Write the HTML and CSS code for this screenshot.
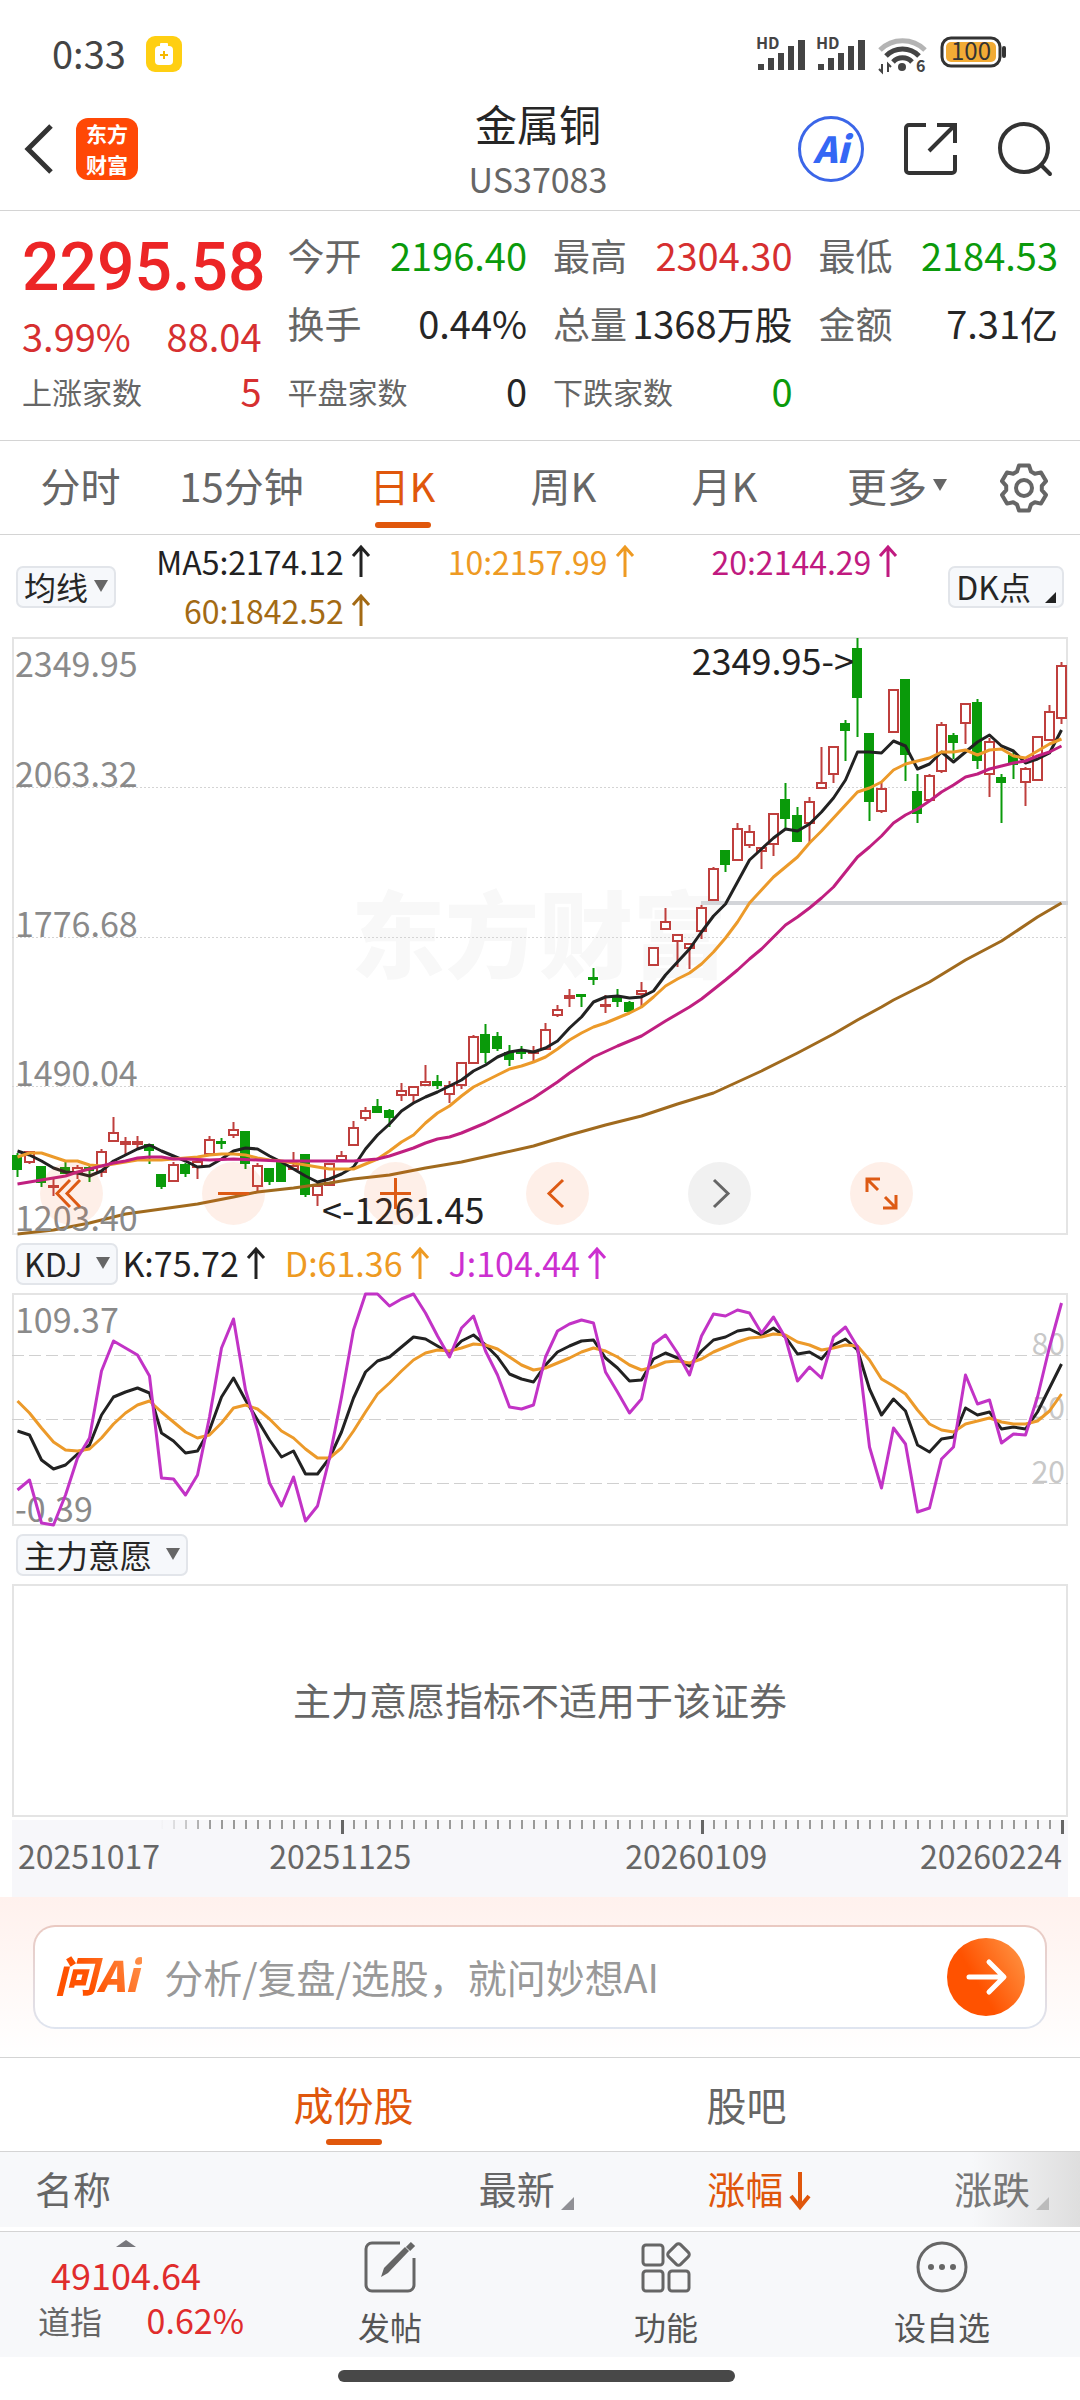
FILE: index.html
```html
<!DOCTYPE html>
<html lang="zh-CN">
<head>
<meta charset="utf-8">
<meta name="viewport" content="width=device-width, initial-scale=1">
<title>金属铜 US37083</title>
<link rel="stylesheet" href="styles.css">
</head>
<body>
<div class="status">
  <div class="status-left">
    <span class="clock">0:33</span>
    <svg class="saver" width="36" height="36" viewBox="0 0 36 36" aria-hidden="true">
      <rect width="36" height="36" rx="9" fill="#ffcf12"/>
      <rect x="14" y="7" width="8" height="4" rx="1" fill="#fff"/>
      <rect x="9" y="10" width="18" height="19" rx="4" fill="#fff"/>
      <path d="M18 15v8M14 19h8" stroke="#f5b800" stroke-width="2"/>
    </svg>
  </div>
  <svg class="status-icons" width="254" height="36" viewBox="0 0 254 36" aria-hidden="true">
    <g fill="#444">
      <text class="hd" x="0" y="13">HD</text>
      <text class="hd" x="60" y="13">HD</text>
      <path d="M2 28h6v6H2zM12 22h6v12h-6zM22 17h6v17h-6zM32 10h6v24h-6zM42 4h7v30h-7z"/>
      <path d="M62 28h6v6h-6zM72 22h6v12h-6zM82 17h6v17h-6zM92 10h6v24h-6zM102 4h7v30h-7z"/>
    </g>
    <g fill="none" stroke-width="5">
      <path d="M124 14a32 32 0 0 1 45 0" stroke="#b4b4b4"/>
      <path d="M130 20a23 23 0 0 1 33 0M137 26a13 13 0 0 1 19 0" stroke="#444"/>
    </g>
    <circle cx="146" cy="31" r="4" fill="#444"/>
    <path d="M126 28v8l-3-3M132 36v-8l3 3" fill="none" stroke="#444" stroke-width="2"/>
    <text class="wifi-gen" x="160" y="36">6</text>
    <rect x="186" y="2" width="58" height="28" rx="9" fill="none" stroke="#333" stroke-width="3"/>
    <rect x="190" y="6" width="50" height="20" rx="5" fill="#f2ab35"/>
    <path d="M248 12v8" stroke="#333" stroke-width="4" stroke-linecap="round"/>
    <text class="battery" x="215" y="24">100</text>
  </svg>
</div>

<header class="header">
  <div class="header-side">
    <button class="icon-btn" aria-label="返回">
      <svg width="30" height="52" viewBox="0 0 30 52"><path d="M27 3L4 26l23 23" fill="none" stroke="#333" stroke-width="5"/></svg>
    </button>
    <div class="brand"><span>东方</span><span>财富</span></div>
  </div>
  <div class="title">
    <h1>金属铜</h1>
    <p>US37083</p>
  </div>
  <div class="header-side header-tools">
    <button class="icon-btn ai-btn" aria-label="AI">Ai</button>
    <button class="icon-btn" aria-label="分享">
      <svg width="54" height="54" viewBox="0 0 54 54"><path d="M22 3H5a3 3 0 0 0-3 3v42a3 3 0 0 0 3 3h43a3 3 0 0 0 3-3V33M33 3h18v18M50 4L25 29" fill="none" stroke="#333" stroke-width="4"/></svg>
    </button>
    <button class="icon-btn" aria-label="搜索">
      <svg width="54" height="54" viewBox="0 0 54 54"><circle cx="26" cy="26" r="24" fill="none" stroke="#333" stroke-width="4"/><path d="M43 43l9 9" stroke="#333" stroke-width="4" stroke-linecap="round"/></svg>
    </button>
  </div>
</header>

<section class="quote">
  <div class="price-block">
    <strong>2295.58</strong>
    <div class="cell up"><span>3.99%</span><span>88.04</span></div>
  </div>
  <div class="cell"><span class="label">今开</span><span class="down">2196.40</span></div>
  <div class="cell"><span class="label">最高</span><span class="up">2304.30</span></div>
  <div class="cell"><span class="label">最低</span><span class="down">2184.53</span></div>
  <div class="cell"><span class="label">换手</span><span>0.44%</span></div>
  <div class="cell"><span class="label">总量</span><span>1368万股</span></div>
  <div class="cell"><span class="label">金额</span><span>7.31亿</span></div>
  <div class="cell"><span class="label small">上涨家数</span><span class="up">5</span></div>
  <div class="cell"><span class="label small">平盘家数</span><span>0</span></div>
  <div class="cell"><span class="label small">下跌家数</span><span class="down">0</span></div>
</section>

<nav class="periods">
  <button class="tab">分时</button>
  <button class="tab">15分钟</button>
  <button class="tab active">日K</button>
  <button class="tab">周K</button>
  <button class="tab">月K</button>
  <button class="tab">更多<i class="caret"></i></button>
  <button class="tab settings" aria-label="设置">
    <svg width="50" height="50" viewBox="-25 -25 50 50" fill="none" stroke="#666" stroke-width="4" stroke-linejoin="round">
      <path d="M-5-22.5L5-22.5 7-16.5 10.8-14.3 17-15.6 22-6.9 17.8-2.2 17.8 2.2 22 6.9 17 15.6 10.8 14.3 7 16.5 5 22.5-5 22.5-7 16.5-10.8 14.3-17 15.6-22 6.9-17.8 2.2-17.8-2.2-22-6.9-17-15.6-10.8-14.3-7-16.5z"/>
      <circle r="8"/>
    </svg>
  </button>
</nav>

<section class="ma-bar">
  <button class="chip">均线<i class="caret"></i></button>
  <div class="ma-list">
    <span class="c-black">MA5:2174.12<svg class="arrow" viewBox="0 0 18 32"><path d="M9 32V2M1 11l8-9 8 9"/></svg></span>
    <span class="c-orange">10:2157.99<svg class="arrow" viewBox="0 0 18 32"><path d="M9 32V2M1 11l8-9 8 9"/></svg></span>
    <span class="c-magenta">20:2144.29<svg class="arrow" viewBox="0 0 18 32"><path d="M9 32V2M1 11l8-9 8 9"/></svg></span>
    <span class="c-brown">60:1842.52<svg class="arrow" viewBox="0 0 18 32"><path d="M9 32V2M1 11l8-9 8 9"/></svg></span>
  </div>
  <button class="chip">DK点<i class="corner"></i></button>
</section>

<section class="frame">
  <svg id="kline" class="plot" viewBox="0 0 1056 598" role="img" aria-label="日K线">
    <text class="watermark" x="339" y="334">东方财富</text>
    <path class="dotted" d="M0 150.5H1056M0 300.5H1056M0 449.5H1056"/>
    <path d="M689 266H1056" stroke="#d3d5d9" stroke-width="4"/>
    <g id="candles"></g>
    <g id="averages"></g>
    <g class="axis-label">
      <text x="3" y="40">2349.95</text>
      <text x="3" y="150">2063.32</text>
      <text x="3" y="300">1776.68</text>
      <text x="3" y="449">1490.04</text>
      <text x="3" y="594">1203.40</text>
    </g>
    <text class="mark" x="842" y="38" text-anchor="end">2349.95-&gt;</text>
    <text class="mark" x="310" y="587">&lt;-1261.45</text>
  </svg>
  <div class="controls">
    <button class="round" aria-label="最早"><svg viewBox="0 0 63 63"><path d="M30 18L17 31.500l13 13.500M40 18L27 31.500l13 13.500"/></svg></button>
    <button class="round" aria-label="缩小"><svg viewBox="0 0 63 63"><path d="M16 31.500h31"/></svg></button>
    <button class="round" aria-label="放大"><svg viewBox="0 0 63 63"><path d="M16 31.500h31M31.500 16v31"/></svg></button>
    <button class="round" aria-label="前移"><svg viewBox="0 0 63 63"><path d="M37 18L23 31.500l14 13.500"/></svg></button>
    <button class="round muted" aria-label="后移"><svg viewBox="0 0 63 63"><path d="M26 18l14 13.500L26 45"/></svg></button>
    <button class="round" aria-label="全屏"><svg viewBox="0 0 63 63"><path d="M17 30V17h13M17 17l11 11M46 33v13H33M46 46L35 35"/></svg></button>
  </div>
</section>

<section class="kdj-bar">
  <button class="chip">KDJ<i class="caret wide"></i></button>
  <span class="c-black">K:75.72<svg class="arrow" viewBox="0 0 18 32"><path d="M9 32V2M1 11l8-9 8 9"/></svg></span>
  <span class="c-orange">D:61.36<svg class="arrow" viewBox="0 0 18 32"><path d="M9 32V2M1 11l8-9 8 9"/></svg></span>
  <span class="c-purple">J:104.44<svg class="arrow" viewBox="0 0 18 32"><path d="M9 32V2M1 11l8-9 8 9"/></svg></span>
</section>

<section class="frame">
  <svg class="plot" viewBox="0 0 1056 233" role="img" aria-label="KDJ">
    <path class="dashed" d="M0 62.500H1056M0 126.500H1056M0 190.500H1056"/>
    <g class="level">
      <text x="1053" y="62">80</text>
      <text x="1053" y="126">50</text>
      <text x="1053" y="190">20</text>
    </g>
    <g class="axis-label">
      <text x="3" y="40">109.37</text>
      <text x="3" y="229">-0.39</text>
    </g>
    <g id="kdj"></g>
  </svg>
</section>

<section class="will-bar"><button class="chip">主力意愿<i class="caret wide"></i></button></section>
<section class="frame empty">主力意愿指标不适用于该证券</section>

<section class="dates">
  <svg class="plot" viewBox="0 0 1056 16" aria-hidden="true">
    <defs><linearGradient id="fade" gradientUnits="userSpaceOnUse" x1="148" x2="200" y1="0" y2="0"><stop stop-color="#999" stop-opacity="0"/><stop offset="1" stop-color="#999"/></linearGradient></defs>
    <g id="ticks"></g>
  </svg>
  <div class="date-row"><span>20251017</span><span>20251125</span><span>20260109</span><span>20260224</span></div>
</section>

<section class="ask">
  <form class="ask-box">
    <label class="ask-logo" for="ask">问Ai</label>
    <input id="ask" type="text" placeholder="分析/复盘/选股，就问妙想AI">
    <button class="send" type="button" aria-label="发送"><svg viewBox="0 0 78 78"><path d="M22 39h34M42 24l15 15-15 15" fill="none" stroke="#fff" stroke-width="5" stroke-linecap="round" stroke-linejoin="round"/></svg></button>
  </form>
</section>

<nav class="sections">
  <button class="tab active">成份股</button>
  <button class="tab">股吧</button>
</nav>

<table class="members">
  <thead>
    <tr>
      <th>名称</th>
      <th>最新<i class="sort"></i></th>
      <th class="sorted">涨幅<svg class="sort-down" viewBox="0 0 22 38"><path d="M11 0v34M2 24l9 11 9-11"/></svg></th>
      <th>涨跌<i class="sort light"></i></th>
    </tr>
  </thead>
</table>

<footer class="dock">
  <button class="index">
    <i class="caret-up"></i>
    <span class="index-value">49104.64</span>
    <span class="index-row"><span class="label">道指</span><span>0.62%</span></span>
  </button>
  <button class="dock-item">
    <svg width="52" height="52" viewBox="0 0 52 52" fill="none" stroke="#666" stroke-width="3"><path d="M36 2H8a6 6 0 0 0-6 6v36a6 6 0 0 0 6 6h36a6 6 0 0 0 6-6V17"/><path d="M17 36l3-9L41 6l4 4-21 22z" fill="#666" stroke="none"/><path d="M44 8l5-5" stroke-width="6"/></svg>
    发帖
  </button>
  <button class="dock-item">
    <svg width="52" height="52" viewBox="0 0 52 52" fill="none" stroke="#666" stroke-width="3"><rect x="3" y="4" width="20" height="20" rx="3"/><rect x="3" y="30" width="20" height="20" rx="3"/><rect x="29" y="30" width="20" height="20" rx="3"/><rect x="30" y="5" width="17" height="17" rx="3" transform="rotate(45 38.500 13.500)"/></svg>
    功能
  </button>
  <button class="dock-item">
    <svg width="52" height="52" viewBox="0 0 52 52"><circle cx="26" cy="26" r="24" fill="none" stroke="#666" stroke-width="3"/><g fill="#666"><circle cx="15" cy="26" r="3"/><circle cx="26" cy="26" r="3"/><circle cx="37" cy="26" r="3"/></g></svg>
    设自选
  </button>
</footer>
<div class="home"><span></span></div>
<script src="chart.js"></script>
</body>
</html>
```

FILE: styles.css
```css
* { box-sizing: border-box; }

body {
  margin: 0;
  background: #fff;
  color: #262626;
  font-family: "Noto Sans CJK SC", "Noto Sans", sans-serif;
  font-size: 38px;
  line-height: 48px;
}

button {
  margin: 0;
  padding: 0;
  border: 0;
  background: none;
  color: inherit;
  font: inherit;
}

svg { display: block; overflow: visible; }
i { flex: none; }

.up { color: #d62f30; }
.down { color: #0b9a0b; }
.c-black { color: #222; }
.c-orange { color: #ee9a22; }
.c-magenta { color: #c01a80; }
.c-brown { color: #a36a14; }
.c-purple { color: #cc2fd0; }

/* status bar */
.status {
  display: flex;
  align-items: center;
  justify-content: space-between;
  height: 96px;
  padding: 12px 70px 0 52px;
}
.status-left { display: flex; align-items: center; gap: 20px; color: #444; }
.clock { padding-bottom: 2px; }
.hd { font-size: 16px; font-weight: 700; }
.wifi-gen { font-size: 16px; font-weight: 700; fill: #444; }
.battery { font-size: 24px; text-anchor: middle; fill: #333; }

/* header */
.header {
  display: grid;
  grid-template-columns: 1fr auto 1fr;
  align-items: center;
  padding: 0 28px 2px 24px;
  border-bottom: 1px solid #d4d4d4;
}
.header-side { display: flex; align-items: center; gap: 22px; padding-bottom: 6px; }
.header-tools { justify-content: flex-end; gap: 40px; }
.brand {
  display: flex;
  flex-direction: column;
  align-items: center;
  width: 62px;
  border-radius: 12px;
  background: #ff4806;
  color: #fff;
  font-size: 21px;
  font-weight: 700;
  line-height: 31px;
}
.title { text-align: center; }
.title h1 { margin: 0; font-size: 42px; font-weight: 400; line-height: 54px; }
.title p { margin: 0; font-size: 34px; line-height: 58px; color: #666; }
.ai-btn {
  width: 66px;
  height: 66px;
  padding-bottom: 4px;
  border: 3px solid #3b66e8;
  border-radius: 50%;
  color: #3467f5;
  font-size: 36px;
  font-style: italic;
  font-weight: 900;
}

/* quote */
.quote {
  display: grid;
  grid-template-columns: repeat(4, minmax(0, 1fr));
  grid-auto-rows: 68px;
  column-gap: 26px;
  padding: 10px 22px 15px;
  border-bottom: 1px solid #d4d4d4;
}
.price-block { grid-row: span 2; padding-top: 3px; }
.price-block strong {
  display: block;
  color: #ec2526;
  font-family: Roboto, "Noto Sans CJK SC", sans-serif;
  font-size: 66px;
  font-weight: 500;
  line-height: 88px;
}
.cell { display: flex; align-items: center; justify-content: space-between; white-space: nowrap; }
.label { color: #666; }
.quote .label { font-size: 37px; }
.quote .label.small { font-size: 30px; }

/* tabs */
.periods, .sections { display: grid; border-bottom: 1px solid #d4d4d4; color: #666; }
.periods { grid-template-columns: repeat(5, 161fr) 184fr 91fr; }
.sections { grid-template-columns: 157fr repeat(2, 393fr) 137fr; }
.sections .tab { padding-bottom: 2px; }
.sections .tab:first-child { grid-column: 2; }
.tab {
  display: flex;
  align-items: center;
  justify-content: center;
  position: relative;
  height: 93px;
  padding-bottom: 5px;
  font-size: 40px;
  white-space: nowrap;
}
.tab.active { color: #e0570c; }
.tab.active::after {
  content: "";
  position: absolute;
  left: calc(50% - 28px);
  bottom: 6px;
  width: 56px;
  height: 6px;
  border-radius: 3px;
  background: #e0570c;
}
.tab.settings { padding: 0 22px 0 0; }

.caret {
  margin-left: 6px;
  border: 7px solid transparent;
  border-top: 12px solid #666;
  border-bottom: 0;
}
.caret.wide { margin-left: 14px; }

/* indicator bars */
.chip {
  display: flex;
  align-items: center;
  height: 42px;
  padding: 0 6px 3px;
  border: 2px solid #e2e5ea;
  border-radius: 7px;
  background: #f6f8fb;
  font-size: 32px;
  line-height: 38px;
  white-space: nowrap;
}
.corner {
  align-self: flex-end;
  margin-left: 14px;
  border-left: 11px solid transparent;
  border-bottom: 11px solid #222;
}
.ma-bar { display: flex; align-items: center; padding: 3px 16px 1px; }
.ma-list {
  display: grid;
  flex: 1;
  grid-template-columns: repeat(3, 264fr) 51fr;
  grid-auto-rows: 49px;
  margin-left: -10px;
  font-size: 32px;
}
.ma-list span { display: flex; align-items: center; justify-content: flex-end; padding-bottom: 4px; }
.ma-list span:nth-child(4) { grid-column: 1; }
.arrow {
  width: 18px;
  height: 32px;
  margin-left: 8px;
  fill: none;
  stroke: currentColor;
  stroke-width: 3;
}
.kdj-bar, .will-bar { display: flex; align-items: center; height: 58px; padding: 0 16px; font-size: 34px; }
.kdj-bar span { display: flex; align-items: center; margin: 0 16px 0 4px; padding-bottom: 2px; }

/* charts */
.frame { position: relative; margin: 0 12px; box-shadow: inset 0 0 0 2px #e4e4e4; }
.plot { width: 100%; height: auto; }
.watermark { font-size: 94px; font-weight: 900; fill: #f8f8f8; }
.dotted { stroke: #d4d4d4; stroke-dasharray: 2 2; }
.dashed { stroke: #d0d0d0; stroke-width: 1; stroke-dasharray: 12 5; }
.axis-label { font-size: 34px; fill: #8a8a8a; }
.level { font-size: 30px; fill: #c8c8c8; text-anchor: end; }
.mark { font-size: 36px; fill: #222; }
.line { fill: none; stroke-width: 3; stroke-linejoin: round; }
.candle-up { fill: #fff; stroke: #bf3f3d; stroke-width: 2; }
.candle-down { fill: #0a9a0a; stroke: #0a9a0a; stroke-width: 2; }
.controls { position: absolute; left: 28px; bottom: 10px; display: flex; gap: 99px; }
.round { width: 63px; height: 63px; border-radius: 50%; background: rgba(245, 100, 30, .1); }
.round path { fill: none; stroke: #dd5a14; stroke-width: 3; }
.round.muted { background: rgba(60, 60, 60, .07); }
.round.muted path { stroke: #666; }
.empty { padding: 91px 0 94px; text-align: center; color: #666; }

.dates { margin: 3px 12px 0; background: #f7f7fa; }
.date-row {
  display: grid;
  grid-template-columns: 146fr 360fr 360fr 190fr;
  padding: 1px 6px 24px;
  font-size: 32px;
  line-height: 36px;
  color: #666;
}
.date-row span:nth-child(2), .date-row span:nth-child(3) { text-align: center; }
.date-row span:last-child { text-align: right; }

/* ask box */
.ask {
  padding: 28px 33px;
  border-bottom: 1px solid #d4d4d4;
  background: linear-gradient(#fff1ed, #fff);
}
.ask-box {
  display: flex;
  align-items: center;
  height: 104px;
  padding: 0 20px;
  border: 2px solid transparent;
  border-radius: 22px;
  background: linear-gradient(#fff, #fff) padding-box, linear-gradient(#eac9c1, #dfe5f0) border-box;
}
.ask-logo {
  padding: 0 4px 6px 0;
  color: transparent;
  background: linear-gradient(60deg, #ff5200 40%, #ff9550);
  background-clip: text;
  font-size: 42px;
  font-style: italic;
  font-weight: 900;
}
.ask-box input {
  flex: 1;
  min-width: 0;
  margin-left: 22px;
  padding: 0 0 2px;
  border: 0;
  outline: 0;
  background: none;
  font: inherit;
  font-size: 39px;
}
.ask-box input::placeholder { color: #999; opacity: 1; }
.send { width: 78px; height: 78px; border-radius: 50%; background: linear-gradient(60deg, #ff5200 40%, #ff9a4a); }

/* member table */
.members {
  width: 100%;
  table-layout: fixed;
  border-collapse: collapse;
  background: linear-gradient(90deg, transparent 90%, #dedede), #f7f8fa;
  color: #666;
}
.members th { height: 75px; padding: 0 31px 4px 0; font-weight: 400; text-align: right; white-space: nowrap; }
.members th:first-child { width: 34%; padding-left: 35px; text-align: left; }
.members .sorted { color: #e0570c; }
.sort {
  display: inline-block;
  margin-left: 6px;
  vertical-align: -6px;
  border-left: 13px solid transparent;
  border-bottom: 13px solid #909095;
}
.sort.light { border-bottom-color: #bbb; }
.members th:last-child { color: #777; }
.sort-down {
  display: inline-block;
  width: 22px;
  height: 38px;
  margin-left: 6px;
  vertical-align: -6px;
  fill: none;
  stroke: #e0570c;
  stroke-width: 4;
}

/* dock */
.dock {
  display: grid;
  grid-template-columns: 252fr repeat(3, 276fr);
  height: 126px;
  margin-top: 4px;
  border-top: 1px solid #d4d4d4;
  background: #f7f8fa;
  font-size: 32px;
}
.index { display: flex; flex-direction: column; align-items: center; color: #e02c2c; }
.caret-up { margin: 8px 0 1px; border: 10px solid transparent; border-top: 0; border-bottom: 7px solid #77777c; }
.index-value { font-size: 36px; line-height: 52px; }
.index-row { display: flex; align-self: stretch; justify-content: space-between; padding: 0 8px 0 38px; line-height: 40px; font-size: 34px; }
.index-row .label { font-size: 32px; }
.dock-item { display: flex; flex-direction: column; align-items: center; padding-top: 9px; line-height: 48px; gap: 9px; color: #555; }
.home { display: flex; justify-content: center; padding: 13px 7px 18px 0; }
.home span { width: 37%; height: 12px; border-radius: 6px; background: #484848; }
```

FILE: chart.js
```javascript
const NS = "http://www.w3.org/2000/svg";
const STEP = 12;
const LEFT = 5.5;

function add(parentId, tag, attrs) {
  const node = document.createElementNS(NS, tag);
  for (const key in attrs) node.setAttribute(key, attrs[key]);
  document.getElementById(parentId).appendChild(node);
}

const xAt = (i) => LEFT + i * STEP;

// One row per day: direction, high, body top, body bottom, low.
const candles = `g516,519,532,540 r515,515,525,527 g529,530,545,550 r542,549,550,559 g525,531,536,536
r528,531,535,542 g529,531,533,545 r512,515,535,540 r480,496,504,505 r500,505,507,519
r499,505,507,511 g507,508,513,527 g537,538,549,552 r525,528,544,544 g526,528,536,540
r523,525,530,542 r499,503,517,518 g501,505,506,512 r485,493,498,501 g494,495,526,532
r526,529,549,556 g531,532,544,548 g526,526,544,545 r515,529,532,533 g517,518,557,560
r546,549,558,569 r526,527,548,548 r514,519,523,524 r484,491,508,509 r470,474,481,484
g462,470,475,476 g472,474,480,490 r446,454,458,464 r449,450,458,466 r428,445,448,449
g438,445,448,452 r444,449,457,466 r425,426,448,452 r398,400,426,427 g387,398,415,426
g395,400,411,414 g408,416,422,429 g409,414,416,422 r409,415,416,424 r386,393,412,412
r368,373,378,380 r352,359,361,370 g358,358,359,370 g331,341,342,348 r358,368,369,376
g352,360,364,370 g364,366,374,376 r345,354,357,371 r311,311,328,329 r271,285,292,292
r298,298,304,330 r306,307,311,332 r268,271,294,302 r230,232,263,264 g213,214,227,235
r186,192,223,224 r188,195,208,211 r210,211,214,232 r176,177,207,219 g146,163,181,193
g170,179,204,205 r160,165,186,205 r110,146,151,151 r110,110,137,146 g83,87,93,124
g1,12,60,100 g96,97,164,184 r146,152,174,176 r52,53,95,96 g42,43,117,144
g137,155,176,186 r137,139,163,164 r85,88,134,136 g96,99,105,122 r67,67,86,107
g62,66,123,132 r101,105,137,160 g137,141,145,186 g114,119,127,142 r130,132,145,169
r100,100,143,144 r68,75,103,104 r25,29,81,87`.split(/\s+/);

candles.forEach((row, i) => {
  const [high, top, bottom, low] = row.slice(1).split(",").map(Number);
  const x = xAt(i);
  const rising = row[0] === "r";
  const cls = rising ? "candle-up" : "candle-down";
  const width = rising ? 9 : 8;
  add("candles", "path", { class: cls, d: `M${x} ${high}V${low}` });
  add("candles", "rect", { class: cls, x: x - 4.5, y: top, width, height: Math.max(bottom - top, 1) });
});

// A series is a list of y values; "i:y" jumps to day i.
function line(target, color, values) {
  let next = 0;
  const points = values.trim().split(/\s+/).map((item) => {
    const parts = item.split(":").map(Number);
    if (parts.length === 2) next = parts[0];
    return `${xAt(next++)},${parts[parts.length - 1]}`;
  });
  add(target, "polyline", { class: "line", stroke: color, points: points.join(" ") });
}

line("averages", "#a06a1e", `0:597 3:593 6:586 9:577 12:572 15:567 18:560 20:555 23:551 26:546 28:542
31:538 34:531 37:525 40:517 43:509 46:498 49:488 52:479 55:467 58:456 60:445 62:434 65:416 68:397
70:383 72:370 73:363 76:345 79:323 82:304 85:280 87:266`);
line("averages", "#222", `514 518 524 531 535 536 539 534 524 518 512 508 514 519 524 530 529 522 514 511
512 519 525 532 539 545 542 537 530 512 498 487 474 466 460 455 449 443 434 428 420 415 413 415 411
404 391 380 365 360 359 361 360 354 338 325 312 295 279 267 245 223 212 201 192 194 187 175 161 143
115 115 116 104 109 132 127 115 125 115 105 98 109 114 126 122 116 93`);
line("averages", "#ec9a2a", `520 516 516 520 524 524 528 529 527 525 523 523 523 522 521 520 518 517 517 518
521 523 524 526 528 530 532 532 532 527 522 514 505 498 486 476 469 459 450 444 438 432 429 425 420
412 403 396 390 386 381 376 370 360 349 342 336 327 315 301 285 266 253 240 230 220 206 194 181 168
155 151 145 133 127 124 121 115 115 113 118 113 112 119 121 114 107 102`);
line("averages", "#c01f80", `547 545 543 541 539 535 532 529 526 524 521 520 520 522 522 16:523 18:522 20:523
22:524 26:524 28:524 30:522 519 515 511 506 502 500 496 491 486 41:474 43:461 45:445 436 428 420
50:409 52:399 54:384 56:370 362 59:343 333 322 312 300 288 280 271 261 250 235 220 210 199 186 178
172 164 155 148 140 137 132 129 126 124 119 115 109`);

line("kdj", "#222", `138 142 167 176 172 161 152 122 104 99 95 100 140 148 160 158 137 104 85 107 127 147
164 158 181 181 165 139 105 79 68 64 54 44 46 53 60 48 42 52 64 81 86 89 72 59 53 48 47 65 75 88 87
66 60 65 73 58 47 44 38 36 42 35 44 61 59 66 52 46 57 96 122 106 118 152 159 146 144 115 122 119 136
134 136 119 95 71`);
line("kdj", "#ec9a2a", `108 120 135 149 157 158 156 145 131 120 112 108 119 129 139 145 142 130 115 112 116
126 138 145 156 165 165 155 138 119 101 90 78 67 60 57 58 55 51 52 56 64 72 77 75 70 65 59 55 58 64
72 77 74 69 68 70 66 59 54 49 45 44 41 42 49 52 57 55 52 53 67 86 93 101 117 131 137 139 131 128 125
129 131 131 128 118 101`);
line("kdj", "#c233c6", `197 187 230 232 202 165 145 78 48 55 62 83 185 186 202 182 124 55 26 97 137 190 213
184 228 213 165 104 37 1 1 13 6 1 20 43 64 35 23 58 82 114 116 112 64 38 31 27 30 79 99 120 106 51
42 60 82 43 21 23 17 20 40 24 45 88 74 85 44 34 54 154 195 135 151 219 215 166 154 82 111 107 150
141 142 104 54 10`);

for (let i = 12; i < 88; i++) {
  const major = i === 27 || i === 57 || i === 87;
  add("ticks", "rect", {
    x: xAt(i) - 0.5, y: 0, width: major ? 3 : 2, height: major ? 14 : 9,
    fill: major ? "#666" : "url(#fade)",
  });
}
```
